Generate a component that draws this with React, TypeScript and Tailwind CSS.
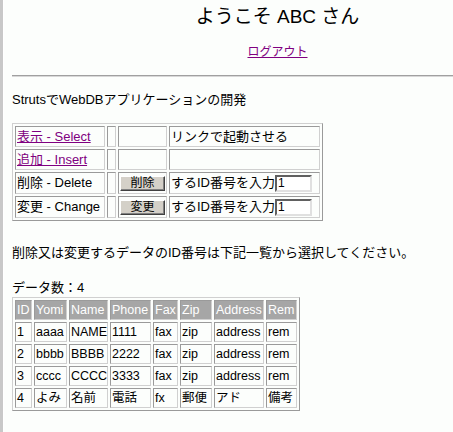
const font = "font-['Liberation_Sans','Noto_Sans_CJK_JP',sans-serif]";

const rows = [
  ["1", "aaaa", "NAME", "1111", "fax", "zip", "address", "rem"],
  ["2", "bbbb", "BBBB", "2222", "fax", "zip", "address", "rem"],
  ["3", "cccc", "CCCC", "3333", "fax", "zip", "address", "rem"],
  ["4", "よみ", "名前", "電話", "fx", "郵便", "アド", "備考"],
];

const headers = [
  { label: "ID", w: "w-[17px]" },
  { label: "Yomi", w: "w-[33px]" },
  { label: "Name", w: "w-[39px]" },
  { label: "Phone", w: "w-[41px]" },
  { label: "Fax", w: "w-[25px]" },
  { label: "Zip", w: "w-[32px]" },
  { label: "Address", w: "w-[50px]" },
  { label: "Rem", w: "w-[31px]" },
];

const cell =
  "border border-t-[#9a9a9a] border-l-[#9a9a9a] border-b-[#d0d0d0] border-r-[#d0d0d0] p-0 px-[1px] align-middle text-left font-normal whitespace-nowrap";

const tableBox =
  "table-fixed border-separate border-spacing-[2px] border border-t-[#d0d0d0] border-l-[#d0d0d0] border-b-[#9a9a9a] border-r-[#9a9a9a]";

function Button({ label }: { label: string }) {
  return (
    <button
      type="button"
      className="h-[15px] w-[45px] border border-t-white border-l-white border-b-[#404040] border-r-[#404040] bg-[#d4d0c8] text-[12px] leading-[13px] text-black shadow-[inset_-1px_-1px_0_#808080]"
    >
      {label}
    </button>
  );
}

function IdInput() {
  return (
    <input
      readOnly
      value="1"
      className="h-[17px] w-[37px] shrink-0 border-2 border-t-[#606060] border-l-[#606060] border-b-[#e0e0e0] border-r-[#e0e0e0] bg-white px-[1px] text-[12px] leading-[13px] text-black outline-none"
    />
  );
}

export default function App() {
  return (
    <div className={`flex h-[432px] w-[453px] overflow-hidden bg-[#fcfefc] text-black ${font}`}>
      <div className="w-[3px] shrink-0 bg-[#c8c8c8]" />
      <div className="w-px shrink-0 bg-white" />
      <div className="ml-[8px] w-[531px] shrink-0">
        <div className="h-[34px] text-center text-[19px] leading-[34px]">ようこそ ABC さん</div>
        <div className="mt-[10px] h-[16px] text-center text-[12px] leading-[16px]">
          <a href="#" className="text-[#800080] underline">
            ログアウト
          </a>
        </div>
        <div className="mt-[15px] w-full border-t border-b border-t-[#a0a0a0] border-b-[#d8d8d8]" />
        <div className="mt-[15px] h-[16px] text-[13px] leading-[16px]">StrutsでWebDBアプリケーションの開発</div>

        <table className={`mt-[15px] w-[311px] text-[13px] leading-[14px] ${tableBox}`}>
          <tbody>
            <tr className="h-[21px]">
              <td className={`${cell} w-[90px]`}>
                <a href="#" className="text-[#800080] underline">表示 - Select</a>
              </td>
              <td className={`${cell} w-[9px]`} />
              <td className={`${cell} w-[49px]`} />
              <td className={`${cell} w-[151px]`}>リンクで起動させる</td>
            </tr>
            <tr className="h-[21px]">
              <td className={cell}>
                <a href="#" className="text-[#800080] underline">追加 - Insert</a>
              </td>
              <td className={cell} />
              <td className={cell} />
              <td className={cell} />
            </tr>
            <tr className="h-[22px]">
              <td className={cell}>削除 - Delete</td>
              <td className={cell} />
              <td className={`${cell} text-center`}>
                <Button label="削除" />
              </td>
              <td className={cell}>
                <div className="flex items-center">
                  <span>するID番号を入力</span>
                  <IdInput />
                </div>
              </td>
            </tr>
            <tr className="h-[22px]">
              <td className={cell}>変更 - Change</td>
              <td className={cell} />
              <td className={`${cell} text-center`}>
                <Button label="変更" />
              </td>
              <td className={cell}>
                <div className="flex items-center">
                  <span>するID番号を入力</span>
                  <IdInput />
                </div>
              </td>
            </tr>
          </tbody>
        </table>

        <div className="mt-[24px] h-[16px] text-[13px] leading-[16px]">
          削除又は変更するデータのID番号は下記一覧から選択してください。
        </div>
        <div className="mt-[19px] h-[16px] text-[13px] leading-[16px]">データ数：4</div>

        <table className={`mt-[1px] w-[288px] text-[12.5px] leading-[14px] ${tableBox}`}>
          <thead>
            <tr className="h-[20px]">
              {headers.map((h) => (
                <th
                  key={h.label}
                  className={`${cell} ${h.w} border-[#c4c4c4] bg-[#a6a6a6] text-white`}
                >
                  {h.label}
                </th>
              ))}
            </tr>
          </thead>
          <tbody>
            {rows.map((r) => (
              <tr key={r[0]} className="h-[20px]">
                {r.map((v, i) => (
                  <td key={i} className={cell}>
                    {v}
                  </td>
                ))}
              </tr>
            ))}
          </tbody>
        </table>
      </div>
    </div>
  );
}
